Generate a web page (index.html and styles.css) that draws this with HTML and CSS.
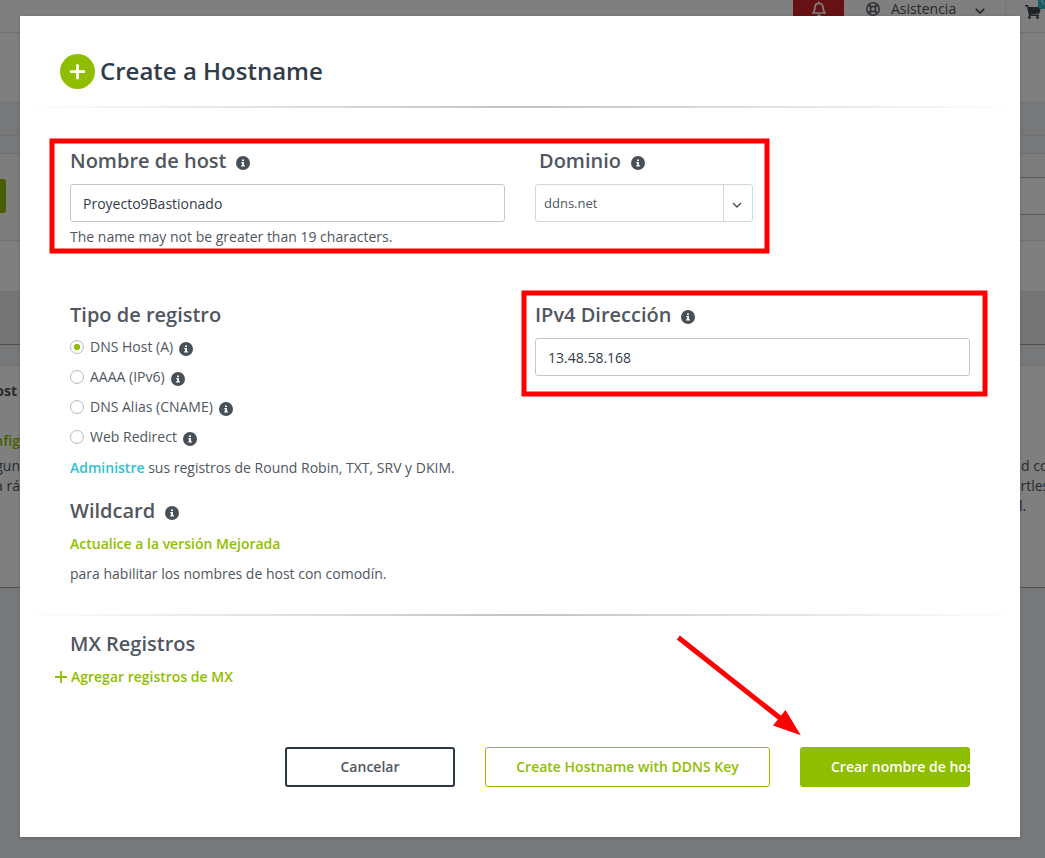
FILE: index.html
```html
<!DOCTYPE html>
<html lang="es">
<head>
<meta charset="utf-8">
<title>Create a Hostname</title>
<link rel="stylesheet" href="styles.css">
</head>
<body>
<svg class="defs" width="0" height="0" aria-hidden="true">
  <symbol id="info" viewBox="0 0 14 14"><circle cx="7" cy="7" r="7" fill="#474f57"/><path d="M6 3.500h2v1.600H6zM5.300 6H8v3.200h.9v1.300H5.200V9.200h.9V7.300h-.8z" fill="#fff"/></symbol>
</svg>
<div class="page">
  <div class="topbar">
    <div class="alert"><svg width="14" height="16" viewBox="0 0 14 16"><path d="M7 .5v1.600M1 12h12c-1.600-1.500-1.900-3-1.900-5.200C11.100 4 9.500 2.300 7 2.300S2.900 4 2.900 6.800C2.900 9 2.600 10.500 1 12z" fill="none" stroke="#fff" stroke-width="1.700"/><path d="M5 13.500h4a2 2 0 0 1-4 0z" fill="#fff"/></svg></div>
    <div class="support"><svg width="14" height="14" viewBox="0 0 14 14" fill="none" stroke="#666c72"><circle cx="7" cy="7" r="6.200" stroke-width="1.600"/><circle cx="7" cy="7" r="2.500" stroke-width="1.600"/><path d="M2.700 2.700l2.500 2.500M8.800 8.800l2.500 2.500M11.300 2.700L8.800 5.200M5.200 8.800l-2.500 2.500" stroke-width="2.600"/></svg><span>Asistencia</span><svg class="caret" width="10" height="6" viewBox="0 0 10 6"><path d="M.8.800L5 5 9.200.800" fill="none" stroke="#474f57" stroke-width="1.700"/></svg></div>
    <div class="cart"><svg width="16" height="14" viewBox="0 0 16 14"><path d="M0 .8h2.500l2.200 9.500H14" fill="none" stroke="#3d4650" stroke-width="1.500"/><path d="M3 2h13l-1.500 6.500-9.800 1z" fill="#3d4650"/><circle cx="4.500" cy="12.500" r="1.400" fill="#3d4650"/><circle cx="12.500" cy="12.500" r="1.400" fill="#3d4650"/></svg><span class="count">0</span></div>
  </div>
  <div class="band band-nav"></div>
  <div class="band band-crumb"></div>
  <div class="band band-sub"></div>
  <div class="band band-tools"><span class="add"></span><span class="search"></span></div>
  <div class="band band-row"></div>
  <div class="band band-foot"></div>
  <div class="band band-gap"></div>
  <div class="panel">
    <div class="line head"><span class="l"><b>Host</b></span></div>
    <div class="line"><span class="l"><em>Config</em></span></div>
    <div class="line"><span class="l">Algun</span><span class="r">d cont</span></div>
    <div class="line"><span class="l">la rá</span><span class="r r2">ortless</span></div>
    <div class="line"><span class="r r3">l.</span></div>
  </div>
</div>
<div class="shade"></div>
<div class="modal">
  <header class="title"><svg width="35" height="35" viewBox="0 0 35 35"><circle cx="17.500" cy="17.500" r="17.500" fill="#8fbe00"/><path d="M17.500 11.300v12.800M11.100 17.700h12.800" stroke="#fff" stroke-width="2.800" stroke-linecap="round"/></svg><h1>Create a Hostname</h1></header>
  <div class="rule"></div>
  <section class="row host">
    <div class="col">
      <h2>Nombre de host<svg class="info"><use href="#info"/></svg></h2>
      <div class="input">Proyecto9Bastionado</div>
      <p class="help">The name may not be greater than 19 characters.</p>
    </div>
    <div class="col domain">
      <h2>Dominio<svg class="info"><use href="#info"/></svg></h2>
      <div class="select"><span>ddns.net</span><i><svg width="10" height="6" viewBox="0 0 10 6"><path d="M1 1l4 4 4-4" fill="none" stroke="#474f57" stroke-width="1.400"/></svg></i></div>
    </div>
  </section>
  <section class="row record">
    <div class="col">
      <h2>Tipo de registro</h2>
      <div class="radio on"><i></i>DNS Host (A)<svg class="info"><use href="#info"/></svg></div>
      <div class="radio"><i></i>AAAA (IPv6)<svg class="info"><use href="#info"/></svg></div>
      <div class="radio"><i></i>DNS Alias (CNAME)<svg class="info"><use href="#info"/></svg></div>
      <div class="radio"><i></i>Web Redirect<svg class="info"><use href="#info"/></svg></div>
      <p class="manage"><b>Administre</b> sus registros de Round Robin, TXT, SRV y DKIM.</p>
      <h2 class="wild">Wildcard<svg class="info"><use href="#info"/></svg></h2>
      <p class="upgrade">Actualice a la versión Mejorada</p>
      <p class="note">para habilitar los nombres de host con comodín.</p>
    </div>
    <div class="col">
      <h2>IPv4 Dirección<svg class="info"><use href="#info"/></svg></h2>
      <div class="input">13.48.58.168</div>
    </div>
  </section>
  <div class="rule"></div>
  <section class="mx">
    <h2>MX Registros</h2>
    <p class="addmx"><svg width="12" height="12" viewBox="0 0 12 12"><path d="M6 0v12M0 6h12" stroke="#8fbe00" stroke-width="1.800"/></svg>Agregar registros de MX</p>
  </section>
  <footer class="actions">
    <div class="btn cancel">Cancelar</div>
    <div class="btn key">Create Hostname with DDNS Key</div>
    <div class="btn create">Crear nombre de host</div>
  </footer>
</div>
<svg class="marks" width="1045" height="858" viewBox="0 0 1045 858" fill="none" stroke="#f00" stroke-width="5">
  <rect x="52" y="141" width="715" height="110"/>
  <rect x="524" y="293" width="461" height="101"/>
  <path d="M678.300 637.500L780 718"/>
  <path d="M800.800 735.200L773 725.500L785.500 710z" fill="#f00" stroke="none"/>
</svg>
</body>
</html>
```

FILE: styles.css
```css
* { box-sizing: border-box; margin: 0; padding: 0; }
body {
  width: 1045px; height: 858px; overflow: hidden; position: relative;
  font: 14px/20px "Open Sans", sans-serif; color: #4f565e; background: #eff1f5;
}
.defs { position: absolute; }
svg { display: block; flex: none; }

.topbar { height: 33px; background: #fff; border-bottom: 1px solid #e2e2e2; display: flex; justify-content: flex-end; }
.alert { width: 51px; background: #cc2228; display: flex; justify-content: center; padding: 1px 0 0 1px; }
.support { width: 162px; display: flex; padding: 2px 0 0 22px; border-right: 1px solid #ededed; }
.support span { margin: -3px 0 0 11px; width: 84px; }
.support .caret { margin-top: 6px; }
.cart { width: 39px; padding: 5px 0 0 19px; position: relative; }
.count { position: absolute; left: 32px; top: -9px; width: 16px; height: 18px; border-radius: 3px; background: #38b8c8; color: #fff; font-size: 11px; line-height: 18px; padding-left: 3px; }
.band { border-bottom: 1px solid #e2e2e2; }
.band-nav { height: 70px; background: #fff; border-color: #e6e8ec; }
.band-crumb { height: 33px; background: #eef0f4; }
.band-sub { height: 18px; background: #eef0f4; }
.band-tools { height: 87px; background: #fafafa; display: flex; justify-content: space-between; align-items: center; padding-bottom: 1px; }
.add { width: 6px; height: 34px; margin-top: -1px; background: #8fbe00; border-radius: 0 3px 3px 0; }
.search { width: 35px; height: 38px; margin-top: -2px; border: solid #bbb; border-width: 1px 0; background: #fff; }
.band-row { height: 51px; background: #fff; }
.band-foot { height: 53px; background: #ebebeb; border-color: #9a9a9a; }
.band-gap { height: 21px; background: #eff1f4; }
.panel { height: 222px; background: #fff; border-bottom: 1px solid #9a9a9a; padding-top: 15px; }
.line { height: 20px; display: flex; justify-content: space-between; white-space: nowrap; overflow: hidden; }
.line.head { height: 50px; }
.l { width: 20px; display: flex; justify-content: flex-end; }
.head .l { width: 17px; }
.line:nth-child(2) { height: 25px; align-items: flex-start; }
.l em { font-style: normal; font-weight: 600; color: #8fbe00; }
.line:nth-child(2), .head { line-height: 20px; }
.r { width: 24px; margin-left: auto; }
.r2 { width: 33px; }
.r3 { color: #3a3a80; width: 26px; }

.shade { position: absolute; inset: 0; background: rgba(0, 0, 0, .5); }

.modal { position: absolute; left: 20px; top: 16px; width: 1000px; height: 821px; background: #fff; box-shadow: 0 1px 4px rgba(0, 0, 0, .15); }
.title { height: 90px; padding: 38px 0 0 40px; display: flex; gap: 5px; }
h1 { font-size: 24px; line-height: 34px; font-weight: 600; color: #303c49; }
.rule { height: 2px; background: linear-gradient(90deg, #fff, #c0c3c7 50%, #fff); }
h2 { display: flex; font-size: 20px; line-height: 24px; font-weight: 600; color: #50575f; white-space: nowrap; }
.info { width: 14px; height: 14px; margin: 7px 0 0 10px; }
.row { display: flex; gap: 30px; padding-left: 50px; }
.col { width: 435px; }
.host { padding-top: 41px; height: 195px; }
.input { height: 38px; margin-top: 11px; border: 1px solid #c4c6c8; border-radius: 3px; padding: 1px 12px; line-height: 36px; color: #303c49; }
.help { margin-top: 5px; }
.domain { width: 218px; }
.domain h2 { padding-left: 4px; }
.select { display: flex; height: 38px; margin-top: 11px; border: 1px solid #d3d5d7; border-radius: 3px; font-size: 13px; line-height: 36px; }
.select span { flex: 1; padding-left: 8px; }
.select i { width: 29px; border-left: 1px solid #d3d5d7; padding: 17px 0 0 8px; }
.record { height: 311px; }
.radio { height: 30px; display: flex; line-height: 30px; }
.radio:nth-child(2) { margin-top: 5px; }
.radio i { width: 14px; height: 14px; margin: 8px 6px 0 0; border: 1px solid #b9bbbd; border-radius: 50%; }
.radio.on i { background: radial-gradient(circle, #8fbe00 2.800px, #fff 3.400px); }
.radio .info { margin: 10px 0 0 6px; }
.manage { margin-top: 6px; }
.manage b { color: #2fc1d0; font-weight: 600; }
.wild { margin-top: 21px; }
.upgrade, .addmx { color: #8fbe00; font-weight: 600; }
.upgrade { margin-top: 11px; }
.note { margin-top: 10px; }
.mx { padding: 16px 0 0 50px; height: 131px; }
.addmx { display: flex; align-items: center; gap: 4px; margin: 11px 0 0 -15px; }
.actions { display: flex; gap: 30px; padding-left: 265px; }
.btn { height: 40px; border-radius: 3px; font-weight: 600; line-height: 38px; text-align: center; white-space: nowrap; overflow: hidden; }
.cancel { width: 170px; border: 2px solid #2a3744; line-height: 36px; }
.key { width: 285px; border: 1px solid #8fbe00; color: #8fbe00; }
.create { width: 170px; background: #8fbe00; color: #fff; text-align: left; padding-left: 31px; line-height: 40px; }
.marks { position: absolute; left: 0; top: 0; }
```
